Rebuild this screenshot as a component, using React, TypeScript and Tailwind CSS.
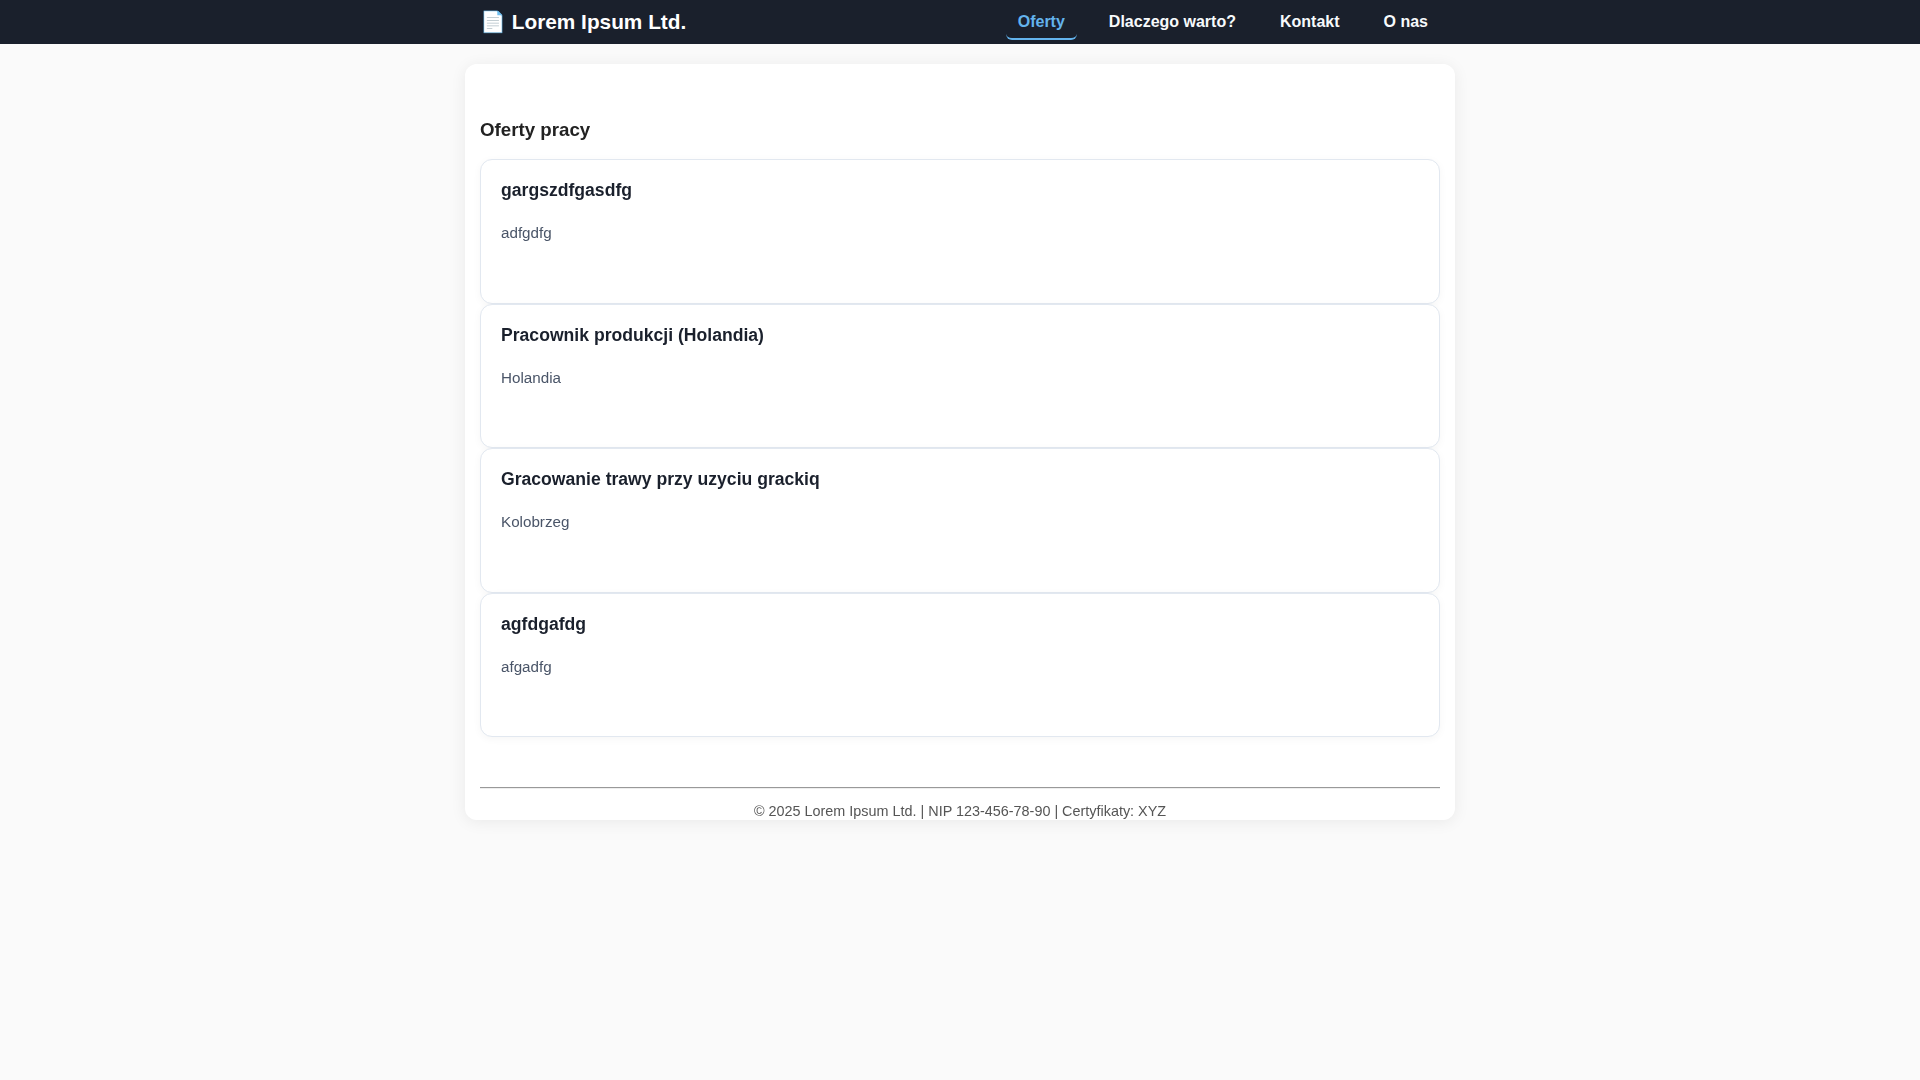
const jobs = [
  { title: "gargszdfgasdfg", place: "adfgdfg" },
  { title: "Pracownik produkcji (Holandia)", place: "Holandia" },
  { title: "Gracowanie trawy przy uzyciu grackiq", place: "Kolobrzeg" },
  { title: "agfdgafdg", place: "afgadfg" },
];

const links = ["Oferty", "Dlaczego warto?", "Kontakt", "O nas"];

export default function App() {
  return (
    <div className="min-h-[1080px] bg-[#fafafa] font-['Liberation_Sans',sans-serif] text-[#222222]">
      <header className="h-[44px] bg-[#1a202c] will-change-[opacity]">
        <div className="mx-auto flex h-full w-[960px] items-center justify-between">
          <div className="text-[20.8px] font-bold text-white">📄 Lorem Ipsum Ltd.</div>
          <nav className="flex h-full items-center gap-[20px]">
            {links.map((link, i) => (
              <a
                key={link}
                className={
                  i === 0
                    ? "flex h-[36px] items-center rounded-[6px] border-b-2 border-[#63b3ed] px-[12px] pt-[2px] text-[16px] font-bold text-[#63b3ed]"
                    : "flex h-[36px] items-center px-[12px] text-[16px] font-bold text-[#f7fafc]"
                }
              >
                {link}
              </a>
            ))}
          </nav>
        </div>
      </header>

      <main className="mx-auto mt-[20px] w-[990px] rounded-[12px] bg-white px-[15px] shadow-[0_2px_16px_rgba(0,0,0,0.07)] will-change-[opacity]">
        <h2 className="pt-[53px] pb-[16.4px] text-[18.72px] leading-[26px] font-bold">Oferty pracy</h2>
        <div className="flex flex-col">
          {jobs.map((job) => (
            <div
              key={job.title}
              className="h-[144.5px] rounded-[12px] border border-[#e2e8f0] bg-white px-[20px] pt-[17px] shadow-[0_2px_8px_rgba(0,0,0,0.04)]"
            >
              <h3 className="text-[17.6px] leading-[26px] font-bold text-[#1a202c]">{job.title}</h3>
              <p className="mt-[21px] text-[15.2px] leading-[18px] text-[#4a5568]">{job.place}</p>
            </div>
          ))}
        </div>
        <hr className="mt-[49.6px] h-[2px] border-t border-b border-t-[#999999] border-b-[#eeeeee]" />
        <footer className="-mb-[2px] pt-[14.5px] text-center text-[14.4px] leading-[16.5px] text-[#555555]">
          © 2025 Lorem Ipsum Ltd. | NIP 123-456-78-90 | Certyfikaty: XYZ
        </footer>
      </main>
    </div>
  );
}
